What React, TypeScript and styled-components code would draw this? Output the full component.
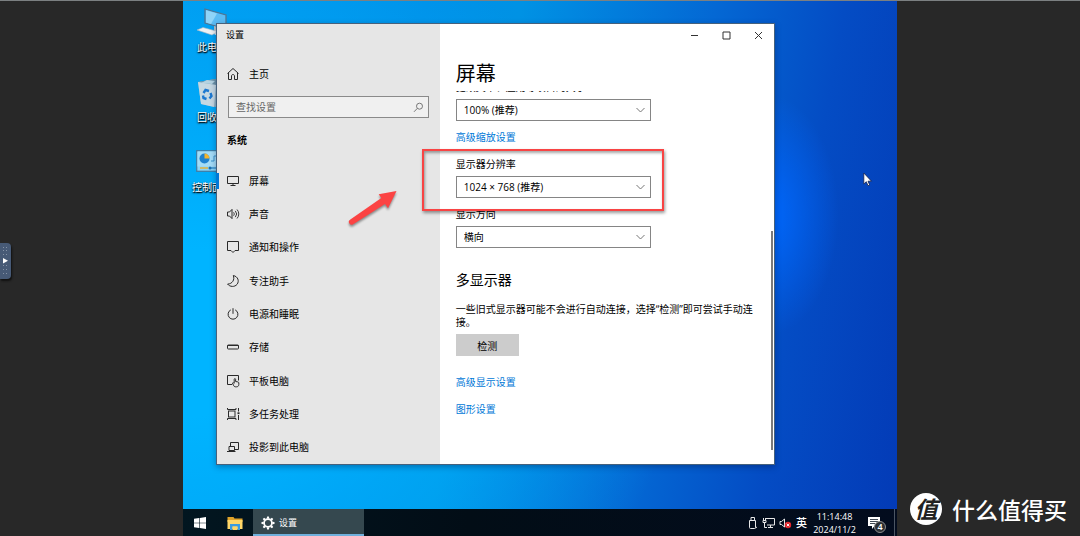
import React from "react";
import styled, { createGlobalStyle } from "styled-components";

const GlobalStyle = createGlobalStyle`
  *, *::before, *::after { box-sizing: border-box; }
  body {
    margin: 0;
    background: #282828;
    color: #000;
    font-family: "Open Sans", "Noto Sans CJK SC", sans-serif;
    font-size: 10px;
  }
  button, input, select { font: inherit; color: inherit; }
  svg { display: block; flex: none; }
`;

/* ---------- remote viewer shell ---------- */

const Viewer = styled.div`
  display: grid;
  grid-template-columns: 183fr 714fr 183fr;
  min-height: 100vh;
  border-top: 1px solid #7c8082;
  overflow: hidden;
`;

const LeftMargin = styled.div`
  display: flex;
  align-items: center;
  padding-bottom: 16px;
`;

const Handle = styled.button`
  width: 11px;
  height: 36px;
  padding: 0;
  border: 0;
  border-radius: 0 4px 4px 0;
  background: #475a76;
  box-shadow: 1px 2px 2px #111;
`;

const RightMargin = styled.div`
  display: flex;
  align-items: flex-end;
  justify-content: flex-end;
  padding: 0 13px 11px 0;
`;

const Watermark = styled.div`
  display: flex;
  align-items: center;
  gap: 10px;
  color: #fff;
  font-family: "Noto Sans CJK SC", sans-serif;
  font-size: 23px;
  font-weight: 500;
  line-height: 32px;
  white-space: nowrap;
`;

const WatermarkBadge = styled.span`
  width: 32px;
  height: 32px;
  border-radius: 50%;
  background: #fff;
  color: #222;
  font-weight: 700;
  font-style: italic;
  line-height: 30px;
  text-align: center;
`;

const Desktop = styled.main`
  display: flex;
  flex-direction: column;
  min-width: 0;
  background:
    radial-gradient(ellipse 70px 120px at 82% 40%, rgba(0, 104, 255, 0.95), rgba(0, 84, 220, 0) 100%),
    radial-gradient(ellipse 500px 420px at 0% 62%, #00b4ff 20%, rgba(0, 180, 255, 0) 100%),
    linear-gradient(100deg, #0098ee 0%, #0090e8 30%, #0092e4 42%, #0468d4 66%, #044cc4 82%, #033ab6 100%);
`;

const Canvas = styled.div`
  position: relative;
  flex: 1;
`;

/* ---------- desktop shortcuts ---------- */

const Shortcuts = styled.div`
  display: flex;
  flex-direction: column;
  width: 58px;
`;

const Shortcut = styled.div`
  display: flex;
  flex-direction: column;
  align-items: center;
  gap: 2px;
  height: 70px;
  padding-top: 5px;
  color: #fff;
  line-height: 14px;
  text-shadow: 0 1px 2px #000, 1px 1px 1px #000;
  white-space: nowrap;
`;

/* ---------- settings window ---------- */

const Window = styled.section`
  position: absolute;
  top: 22px;
  right: 122px;
  bottom: 44px;
  left: 33px;
  display: grid;
  grid-template-columns: 2fr 3fr;
  border: 1px solid #46617c;
  background: #fff;
  box-shadow: 0 2px 6px rgba(0, 20, 60, 0.35);
`;

const Side = styled.aside`
  display: flex;
  flex-direction: column;
  min-width: 0;
  background: #e6e6e6;
`;

const SideTitle = styled.div`
  height: 22px;
  padding-left: 9px;
  font-size: 9px;
  line-height: 22px;
`;

const NavLink = styled.a<{ $active?: boolean }>`
  position: relative;
  display: flex;
  align-items: center;
  gap: 9px;
  padding-left: 9px;
  color: #000;
  line-height: 16px;
  text-decoration: none;

  &::before {
    content: ${(p) => (p.$active ? '""' : "none")};
    position: absolute;
    left: -1px;
    width: 3px;
    height: 16px;
    background: #0078d7;
  }
`;

const HomeRow = styled.div`
  display: grid;
  height: 20px;
  margin: 18px 0 12px;
`;

const SearchBox = styled.label`
  display: flex;
  align-items: center;
  height: 22px;
  margin: 0 11px;
  padding: 0 4px 0 7px;
  border: 1px solid #8a8a8a;
  background: #f0f0f0;
`;

const SearchInput = styled.input`
  flex: 1;
  min-width: 0;
  padding: 0;
  border: 0;
  outline: 0;
  background: transparent;

  &::placeholder { color: #666; opacity: 1; }
`;

const GroupTitle = styled.h2`
  margin: 14px 0 16px 10px;
  font-size: 10px;
  font-weight: 700;
  line-height: 16px;
`;

const NavList = styled.nav`
  display: grid;
  grid-auto-rows: 1fr;
  flex: 1;
`;

const Pane = styled.div`
  position: relative;
  display: flex;
  flex-direction: column;
  min-width: 0;
`;

const Caption = styled.div`
  display: flex;
  justify-content: flex-end;
  height: 22px;
`;

const CaptionButton = styled.button`
  display: grid;
  place-items: center;
  width: 32px;
  padding: 0;
  border: 0;
  background: none;
`;

const PageTitle = styled.h1`
  margin: 16px 0 5px 16px;
  font-size: 20px;
  font-weight: 400;
  line-height: 24px;
`;

const Scroller = styled.div`
  flex: 1;
  min-height: 0;
  overflow: hidden;
  padding: 0 16px;
`;

const Scrolled = styled.div`
  display: flex;
  flex-direction: column;
  align-items: flex-start;
  margin-top: -10px;
`;

const ScrollThumb = styled.div`
  position: absolute;
  top: 47%;
  right: 1px;
  bottom: 14px;
  width: 2px;
  background: #7a7a7a;
`;

const Field = styled.label<{ $gap?: number }>`
  display: flex;
  flex-direction: column;
  gap: 6px;
  width: 195px;
  max-width: 100%;
  margin-top: ${(p) => p.$gap ?? 0}px;
  line-height: 12px;
`;

const SelectWrap = styled.span`
  position: relative;
  display: grid;
  align-items: center;

  svg {
    position: absolute;
    right: 5px;
    pointer-events: none;
  }
`;

const Select = styled.select`
  height: 22px;
  padding: 0 7px;
  border: 1px solid #858585;
  border-radius: 0;
  outline: 0;
  background: #fff;
  appearance: none;
`;

const TextLink = styled.a<{ $gap: number }>`
  margin-top: ${(p) => p.$gap}px;
  color: #0078d7;
  line-height: 16px;
  text-decoration: none;
`;

const SectionTitle = styled.h2`
  margin: 22px 0 13px;
  font-size: 14px;
  font-weight: 400;
  line-height: 20px;
`;

const Paragraph = styled.p`
  margin: 0 0 5px;
  line-height: 13px;
`;

const DetectButton = styled.button`
  width: 63px;
  height: 22px;
  padding: 0;
  border: 0;
  background: #ccc;
`;

/* ---------- annotations ---------- */

const Highlight = styled.div`
  position: absolute;
  top: 125px;
  left: 205px;
  width: 242px;
  height: 62px;
  border: 2px solid #f84444;
  box-shadow: 1px 2px 3px rgba(0, 0, 0, 0.4), inset 1px 2px 3px rgba(0, 0, 0, 0.35);
  pointer-events: none;
`;

const ArrowMark = styled.svg`
  position: absolute;
  top: 164px;
  left: 129px;
  filter: drop-shadow(0 2px 1px rgba(0, 0, 0, 0.4));
`;

const Cursor = styled.svg`
  position: absolute;
  top: 171px;
  right: 24px;
`;

/* ---------- taskbar ---------- */

const Taskbar = styled.footer`
  display: flex;
  height: 27px;
  background: linear-gradient(90deg, #021620, #020d16 40%, #030c1e);
  color: #fff;
`;

const TaskButton = styled.button<{ $width: number; $open?: boolean }>`
  display: flex;
  align-items: center;
  justify-content: ${(p) => (p.$open ? "flex-start" : "center")};
  gap: 4px;
  width: ${(p) => p.$width}px;
  padding: ${(p) => (p.$open ? "2px 8px 0" : "1px 0 0")};
  border: 0;
  border-bottom: ${(p) => (p.$open ? "2px solid #6fb0dc" : "0")};
  background: ${(p) => (p.$open ? "#35484f" : "none")};
  font-size: 9px;
`;

const Tray = styled.div`
  display: flex;
  align-items: center;
  gap: 4px;
  margin-left: auto;
  line-height: 13px;
`;

const InputMode = styled.span`
  font-size: 11px;
  font-weight: 500;
`;

const Clock = styled.time`
  width: 45px;
  margin: 0 6px 0 1px;
  font-size: 9px;
  text-align: center;
  white-space: nowrap;
`;

const Notices = styled.button`
  position: relative;
  width: 19px;
  height: 20px;
  margin-right: 4px;
  padding: 0;
  border: 0;
  background: none;
`;

const NoticeCount = styled.span`
  position: absolute;
  right: 0;
  bottom: 0;
  width: 12px;
  height: 12px;
  border: 1px solid #8c8c8c;
  border-radius: 50%;
  background: #2c2f34;
  color: #fff;
  font-size: 9px;
  font-weight: 600;
  line-height: 10px;
  text-align: center;
`;

const ShowDesktop = styled.span`
  align-self: stretch;
  width: 3px;
  border-left: 1px solid #4b5563;
`;

/* ---------- drawings ---------- */

const Glyph = ({ children }: { children: React.ReactNode }) => (
  <svg width="14" height="14" viewBox="0 0 14 14" fill="none" stroke="#2a2a2a" strokeWidth="1" aria-hidden="true">
    {children}
  </svg>
);

const Chevron = () => (
  <svg width="11" height="8" viewBox="0 0 11 8" fill="none" stroke="#777" strokeWidth="1" aria-hidden="true">
    <path d="M1.500 2l4 4 4-4" />
  </svg>
);

const navItems: { label: string; icon: React.ReactNode }[] = [
  {
    label: "屏幕",
    icon: <path d="M1.500 2.500h11v7h-11zM7 9.500v2M4.500 11.500h5" />,
  },
  {
    label: "声音",
    icon: (
      <>
        <path d="M1.500 5h2l2.500-2.600v9.200L3.500 9h-2z" />
        <path d="M7.600 5.300a2.600 2.600 0 0 1 0 3.400M9.300 3.900a4.600 4.600 0 0 1 0 6.200M11 2.500a6.600 6.600 0 0 1 0 9" strokeWidth=".9" />
      </>
    ),
  },
  {
    label: "通知和操作",
    icon: <path d="M1.500 1.500h11v9h-3.500l-2 2-2-2h-3.500z" />,
  },
  {
    label: "专注助手",
    icon: <path d="M7.300 1.500c1.600 4.200-.8 8.300-5.700 8.600 2.300 2.900 7.100 3.200 9.500.2C13.500 7.100 12 2.500 7.300 1.500z" />,
  },
  {
    label: "电源和睡眠",
    icon: <path d="M4.800 2.900a4.900 4.900 0 1 0 4.400 0M7 1.200v5.600" />,
  },
  {
    label: "存储",
    icon: (
      <>
        <rect x="1.500" y="5" width="11" height="4" rx=".8" />
        <path d="M1.500 5.500h11" />
      </>
    ),
  },
  {
    label: "平板电脑",
    icon: (
      <>
        <path d="M6 10.500H1.500v-9h11v5" />
        <path d="M8.200 9.300V5.300c0-.9 1.400-.9 1.400 0v2.200l2.200.4c.6.1 1 .5 1 1v1.600c0 1.400-.9 2.300-2.200 2.300H9.300c-.7 0-1.200-.4-1.500-1L6.400 9.200c.4-.6 1.200-.5 1.800.1z" fill="#e6e6e6" />
      </>
    ),
  },
  {
    label: "多任务处理",
    icon: (
      <>
        <rect x="2.500" y="4" width="6.500" height="6" />
        <path d="M1.500 1v1.500h8.500V1M1.500 13v-1.500h8.500V13M12.500 1v3.500M12.500 8v5" />
        <path d="M12.500 5.300v1.800" strokeWidth="2" />
      </>
    ),
  },
  {
    label: "投影到此电脑",
    icon: (
      <>
        <path d="M4.500 6V2.500h8v7H8.800" />
        <path d="M3 6.500h5.500v4H3zM1 11.500h8.500" />
      </>
    ),
  },
];

const ThisPc = () => (
  <svg width="32" height="32" viewBox="0 0 32 32" aria-hidden="true">
    <path d="M9 3l21 6v14L9 17z" fill="#5cbcf4" stroke="#4f7592" strokeWidth="1.300" />
    <path d="M10 4.300l11 3.200L15 18 10 16.500z" fill="#8fd4f8" />
    <path d="M18 20l4 1v5l-4-1z" fill="#b8c4cc" />
    <path d="M14 26l8-2 5 2-7 3z" fill="#e2e8ec" />
    <path d="M1 24l6-2.500 15 4-6 3.500z" fill="#eef1f3" stroke="#a7b6bf" strokeWidth=".6" />
  </svg>
);

const RecycleBin = () => (
  <svg width="32" height="32" viewBox="0 0 32 32" aria-hidden="true">
    <path d="M2 6l17-3 11 3-3 23-8 2-14-3z" fill="#8fb0c2" />
    <path d="M2 6l17-3 11 3-10 3z" fill="#6d93a8" />
    <path d="M2 6l18 3-2 22-13-3z" fill="#c6d8e2" />
    <path d="M5 7l6-3 8 1-3 3z" fill="#b4d3e2" />
    <g fill="none" stroke="#1c78d0" strokeWidth="2.400">
      <path d="M7.500 17l2-3 3.500 1" />
      <path d="M14.500 17l1 3-2 2.500" />
      <path d="M10.500 23l-3-1-.5-2.500" />
    </g>
  </svg>
);

const ControlPanel = () => (
  <svg width="32" height="32" viewBox="0 0 32 32" aria-hidden="true">
    <rect x=".7" y="4.700" width="30.600" height="20.600" fill="#8fd4f5" stroke="#3f7ea6" strokeWidth="1.300" />
    <path d="M1.500 5.500h29v15h-29z" fill="#a4dcf7" />
    <circle cx="8.500" cy="12.500" r="5" fill="#1f82cf" />
    <path d="M8.500 12.500v-5a5 5 0 0 1 5 5z" fill="#f5b42c" />
    <path d="M15 15h3v-5h4v3h5" fill="none" stroke="#3a93cc" />
    <path d="M4 22h8" stroke="#e0b23d" strokeWidth="1.500" />
    <path d="M13 22h14" stroke="#3a93cc" strokeWidth="1.500" />
    <circle cx="14" cy="22" r="1.500" fill="#1f6fae" />
  </svg>
);

const gearTeeth = [0, 45, 90, 135, 180, 225, 270, 315];

const Gear = () => (
  <svg width="14" height="14" viewBox="0 0 14 14" aria-hidden="true">
    <circle cx="7" cy="7" r="3.900" fill="none" stroke="#fff" strokeWidth="1.700" />
    {gearTeeth.map((a) => (
      <path key={a} d="M5.700 2.800l.4-2.300h1.800l.4 2.300z" fill="#fff" transform={`rotate(${a} 7 7)`} />
    ))}
  </svg>
);

export default function App() {
  return (
    <>
      <GlobalStyle />
      <Viewer>
        <LeftMargin>
          <Handle aria-label="展开控制栏">
            <svg width="11" height="36" viewBox="0 0 11 36" aria-hidden="true">
              <g fill="#8592a6">
                {[4, 7, 11, 22, 26, 30].map((y) => (
                  <React.Fragment key={y}>
                    <rect x="3" y={y} width="1" height="1" />
                    <rect x="6" y={y} width="1" height="1" />
                  </React.Fragment>
                ))}
              </g>
              <path d="M3 15l5 2.700L3 20.400z" fill="#fff" />
            </svg>
          </Handle>
        </LeftMargin>

        <Desktop>
          <Canvas>
            <Shortcuts>
              <Shortcut><ThisPc />此电脑</Shortcut>
              <Shortcut><RecycleBin />回收站</Shortcut>
              <Shortcut><ControlPanel />控制面板</Shortcut>
            </Shortcuts>

            <Window>
              <Side>
                <SideTitle>设置</SideTitle>
                <HomeRow>
                  <NavLink href="#home">
                    <Glyph><path d="M1.500 6.500L7 1.500l5.500 5M2.500 5.800v6.700h3V9c0-2 3-2 3 0v3.500h3V5.800" /></Glyph>
                    主页
                  </NavLink>
                </HomeRow>
                <SearchBox>
                  <SearchInput placeholder="查找设置" />
                  <svg width="11" height="11" viewBox="0 0 11 11" fill="none" stroke="#777" aria-hidden="true">
                    <circle cx="6.500" cy="4.200" r="3" />
                    <path d="M4.300 6.400L1 9.800" />
                  </svg>
                </SearchBox>
                <GroupTitle>系统</GroupTitle>
                <NavList>
                  {navItems.map((item, i) => (
                    <NavLink key={item.label} href={`#page-${i}`} $active={i === 0}>
                      <Glyph>{item.icon}</Glyph>
                      {item.label}
                    </NavLink>
                  ))}
                </NavList>
              </Side>

              <Pane>
                <Caption>
                  <CaptionButton aria-label="最小化">
                    <svg width="9" height="9" viewBox="0 0 9 9" stroke="#333"><path d="M1 4.500h7" /></svg>
                  </CaptionButton>
                  <CaptionButton aria-label="最大化">
                    <svg width="9" height="9" viewBox="0 0 9 9" fill="none" stroke="#333"><path d="M1 1h7v7H1z" /></svg>
                  </CaptionButton>
                  <CaptionButton aria-label="关闭">
                    <svg width="9" height="9" viewBox="0 0 9 9" stroke="#333"><path d="M1 1l7 7M8 1L1 8" /></svg>
                  </CaptionButton>
                </Caption>
                <PageTitle>屏幕</PageTitle>
                <Scroller>
                  <Scrolled>
                    <Field>
                      更改文本、应用等项目的大小
                      <SelectWrap>
                        <Select><option>100% (推荐)</option></Select>
                        <Chevron />
                      </SelectWrap>
                    </Field>
                    <TextLink href="#scaling" $gap={8}>高级缩放设置</TextLink>
                    <Field $gap={13}>
                      显示器分辨率
                      <SelectWrap>
                        <Select><option>1024 × 768 (推荐)</option></Select>
                        <Chevron />
                      </SelectWrap>
                    </Field>
                    <Field $gap={10}>
                      显示方向
                      <SelectWrap>
                        <Select><option>横向</option></Select>
                        <Chevron />
                      </SelectWrap>
                    </Field>
                    <SectionTitle>多显示器</SectionTitle>
                    <Paragraph>一些旧式显示器可能不会进行自动连接，选择“检测”即可尝试手动连接。</Paragraph>
                    <DetectButton>检测</DetectButton>
                    <TextLink href="#advanced" $gap={18}>高级显示设置</TextLink>
                    <TextLink href="#graphics" $gap={11}>图形设置</TextLink>
                  </Scrolled>
                </Scroller>
                <ScrollThumb />
              </Pane>

              <Highlight />
              <ArrowMark width="54" height="42" viewBox="0 0 54 42" aria-hidden="true">
                <path d="M50.500 3L32.700 6.300l2.600 3.800L4 31.800a2.700 2.700 0 0 0 3.200 4.400L39 16l3 4.300z" fill="#fb4343" />
              </ArrowMark>
            </Window>

            <Cursor width="10" height="15" viewBox="0 0 10 15" aria-hidden="true">
              <path d="M.8 1v11l2.500-2.300 1.700 4 1.700-.7-1.700-3.800h3.500z" fill="#fff" stroke="#14204a" strokeWidth=".8" />
            </Cursor>
          </Canvas>

          <Taskbar>
            <TaskButton $width={34} aria-label="开始">
              <svg width="12" height="12" viewBox="0 0 12 12" fill="#fff">
                <path d="M0 1.800l5.200-.8v4.700H0zM5.800.9L12 0v5.700H5.800zM0 6.300h5.200V11L0 10.200zM5.800 6.300H12V12l-6.200-.9z" />
              </svg>
            </TaskButton>
            <TaskButton $width={36} aria-label="文件资源管理器">
              <svg width="16" height="13" viewBox="0 0 16 13">
                <path d="M.5 0h6l1 1.500h8V5H.5z" fill="#e0a32a" />
                <path d="M.5 3h15v9H.5z" fill="#ffd667" />
                <path d="M3 7h10v6h-2.500V9.500h-5V13H3z" fill="#3a9be0" />
                <path d="M5.500 9.500h5V13h-5z" fill="#ffd667" />
              </svg>
            </TaskButton>
            <TaskButton $width={111} $open>
              <Gear />
              设置
            </TaskButton>

            <Tray>
              <svg width="10" height="14" viewBox="0 0 10 14" fill="none" stroke="#e8e8e8" strokeWidth="1">
                <path d="M3 4.500v-3h3.500v3M1.500 4.500h6v7c0 .6-.4 1-1 1h-4c-.6 0-1-.4-1-1zM7.500 12l1.500-1" />
              </svg>
              <svg width="13" height="12" viewBox="0 0 13 12" fill="none" stroke="#e8e8e8" strokeWidth="1">
                <path d="M4 1.500h8.500v6.500H5M8.500 8v2.500M6 10.500h5M1.500 1v2.500M3.500 1v2.500M1 3.500h3v2H1zM2.500 5.500v5H5" />
              </svg>
              <svg width="13" height="12" viewBox="0 0 13 12">
                <path d="M1 4.500h1.500L5.500 2v8L2.500 7.500H1z" fill="none" stroke="#e8e8e8" />
                <circle cx="9" cy="8" r="3.200" fill="#e0262d" />
                <path d="M7.700 6.700l2.600 2.600M10.300 6.700L7.700 9.300" stroke="#fff" strokeWidth=".9" />
              </svg>
              <InputMode>英</InputMode>
              <Clock>
                11:14:48
                <br />
                2024/11/2
              </Clock>
              <Notices aria-label="通知">
                <svg width="14" height="14" viewBox="0 0 14 14">
                  <path d="M1 1h12v9H7.500L5 13v-3H1z" fill="#fff" />
                  <path d="M3 3.500h8M3 5.500h8M3 7.500h5" stroke="#101a2a" strokeWidth=".8" />
                </svg>
                <NoticeCount>4</NoticeCount>
              </Notices>
              <ShowDesktop />
            </Tray>
          </Taskbar>
        </Desktop>

        <RightMargin>
          <Watermark>
            <WatermarkBadge>值</WatermarkBadge>
            什么值得买
          </Watermark>
        </RightMargin>
      </Viewer>
    </>
  );
}
